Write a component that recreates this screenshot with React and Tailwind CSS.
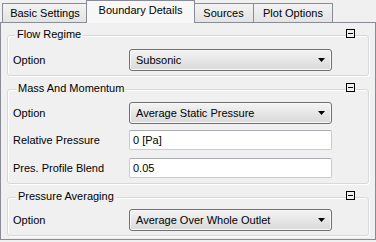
import React from "react";

const tabs = [
  { label: "Basic Settings", cls: "ml-[2px] w-[86px]" },
  { label: "Boundary Details", cls: "ml-[-2px] w-[109px]", active: true },
  { label: "Sources", cls: "ml-[-2px] w-[61px]" },
  { label: "Plot Options", cls: "ml-[-1px] w-[80px]" },
];

function Tab({ label, cls, active }) {
  if (active) {
    return (
      <div
        className={`${cls} relative z-10 mb-[-1px] flex h-[23px] items-start justify-center border border-b-0 border-[#898c95] bg-[#f7f7f7] pt-[3px] leading-[13px]`}
      >
        {label}
      </div>
    );
  }
  return (
    <div
      className={`${cls} flex h-[19px] items-start justify-center border border-b-0 border-[#898c95] bg-gradient-to-b from-[#f3f3f3] to-[#e3e3e3] pt-[3px] leading-[13px]`}
    >
      {label}
    </div>
  );
}

function Collapse() {
  return (
    <div className="absolute right-[13px] top-[-7px] flex h-[9px] w-[9px] items-center justify-center border border-black bg-[#f0f0f0]">
      <div className="h-px w-[5px] bg-black" />
    </div>
  );
}

// group box, title and collapse button sit on top of its border
function Group({ title, titleCls = "left-[8px]", className = "", children }) {
  return (
    <div
      className={`relative mx-[6px] rounded-[3px] border border-[#d5d9dd] pl-[5px] shadow-[inset_1px_1px_0_#ffffff,1px_1px_0_#ffffff] ${className}`}
    >
      <span
        className={`absolute ${titleCls} top-[-8px] bg-[#f0f0f0] px-[2px] leading-[13px]`}
      >
        {title}
      </span>
      <Collapse />
      {children}
    </div>
  );
}

function Row({ label, children, className = "" }) {
  return (
    <div className={`flex items-center ${className}`}>
      <span className="w-[116px] leading-[13px]">{label}</span>
      {children}
    </div>
  );
}

function Select({ value }) {
  return (
    <div className="flex h-[22px] w-[203px] items-center justify-between rounded-[3px] border border-[#707070] bg-gradient-to-b from-[#f4f4f4] to-[#d9d9d9] pl-[6px] pr-[6px] shadow-[inset_0_0_0_1px_#f8f8f8]">
      <span className="leading-[13px]">{value}</span>
      <svg width="7" height="4" viewBox="0 0 7 4">
        <path d="M0 0h7L3.5 4z" fill="#000" />
      </svg>
    </div>
  );
}

function Input({ value }) {
  return (
    <div className="flex h-[20px] w-[203px] items-center rounded-[2px] border border-[#c9cbd0] border-t-[#abadb3] bg-white pl-[3px] leading-[13px]">
      {value}
    </div>
  );
}

export default function App() {
  return (
    <div className="h-[242px] w-[376px] bg-[#f0f0f0] font-['Liberation_Sans',Arial,sans-serif] text-[11px] text-black">
      <div className="flex h-[22px] items-end">
        {tabs.map((t) => (
          <Tab key={t.label} {...t} />
        ))}
      </div>
      <div className="border border-[#898c95] bg-[#f0f0f0] pb-[3px] pt-[12px]">
        <Group title="Flow Regime" titleCls="left-[7px]" className="pb-[4px] pt-[13px]">
          <Row label="Option">
            <Select value="Subsonic" />
          </Row>
        </Group>
        <Group title="Mass And Momentum" className="mt-[13px] pb-[5px] pt-[12px]">
          <Row label="Option">
            <Select value="Average Static Pressure" />
          </Row>
          <Row label="Relative Pressure" className="mt-[6px]">
            <Input value="0 [Pa]" />
          </Row>
          <Row label="Pres. Profile Blend" className="mt-[8px]">
            <Input value="0.05" />
          </Row>
        </Group>
        <Group title="Pressure Averaging" className="mt-[13px] pb-[4px] pt-[11px]">
          <Row label="Option">
            <Select value="Average Over Whole Outlet" />
          </Row>
        </Group>
      </div>
    </div>
  );
}
